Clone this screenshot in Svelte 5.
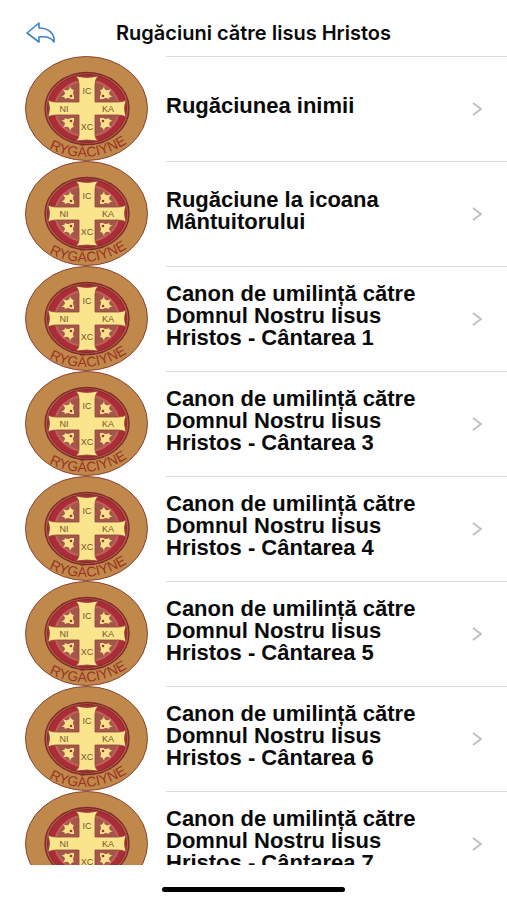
<script>
	const prayers = [
		'Rugăciunea inimii',
		'Rugăciune la icoana Mântuitorului',
		'Canon de umilință către Domnul Nostru Iisus Hristos - Cântarea 1',
		'Canon de umilință către Domnul Nostru Iisus Hristos - Cântarea 3',
		'Canon de umilință către Domnul Nostru Iisus Hristos - Cântarea 4',
		'Canon de umilință către Domnul Nostru Iisus Hristos - Cântarea 5',
		'Canon de umilință către Domnul Nostru Iisus Hristos - Cântarea 6',
		'Canon de umilință către Domnul Nostru Iisus Hristos - Cântarea 7'
	];
</script>

{#snippet medallion(i)}
	<svg class="medallion" viewBox="0 0 123 105" aria-hidden="true">
		<ellipse cx="61.5" cy="52.5" rx="61" ry="52" fill="#c0894b" stroke="#8a4434" />
		<ellipse cx="62" cy="52.5" rx="42" ry="36" fill="#bd5a48" stroke="#7c2a2b" stroke-width="1.4" />
		<ellipse cx="62" cy="52.5" rx="39.5" ry="34" fill="#ac2c38" stroke="#7c2a2b" />
		<ellipse cx="62" cy="52.5" rx="32" ry="28" fill="#a35649" stroke="#bd625a" stroke-width="2" />
		<path
			d="M51 20 Q62 23 73 20 Q70 24 70 28 V46 H93 Q98 46 101 44 Q98 52 101 61 Q98 59 93 59 H70 V79 Q70 82 73 85 Q62 83 51 85 Q54 82 54 79 V59 H31 Q26 59 23 61 Q26 52 23 44 Q26 46 31 46 H54 V28 Q54 24 51 20 Z"
			fill="#fbe58c"
			stroke="#8e4a3a"
			stroke-width="0.8"
		/>
		<g fill="#fbe08c">
			<path
				id="leaf-{i}"
				d="M45 30 Q46 34 49 34 Q47 37 49 40 V43 H46 Q43 41 40 43 Q40 40 36 41 Q40 39 40 37 L38 33 Q41 35 43 34 Q45 33 45 30 Z"
			/>
			<use href="#leaf-{i}" transform="matrix(-1 0 0 1 124 0)" />
			<use href="#leaf-{i}" transform="matrix(1 0 0 -1 0 105)" />
			<use href="#leaf-{i}" transform="matrix(-1 0 0 -1 124 105)" />
		</g>
		<g fill="#9a3a2c">
			<circle cx="46" cy="40" r="1.3" />
			<circle cx="78" cy="40" r="1.3" />
			<circle cx="46" cy="65" r="1.3" />
			<circle cx="78" cy="65" r="1.3" />
		</g>
		<g class="initials">
			<text x="62" y="38">IC</text>
			<text x="39" y="56">NI</text>
			<text x="83" y="56">KA</text>
			<text x="62" y="74">XC</text>
		</g>
		<path id="rim-{i}" d="M22 91 Q62 113 104 86" fill="none" />
		<text class="rim"><textPath href="#rim-{i}" startOffset="50%">RYGĂCIYNE</textPath></text>
	</svg>
{/snippet}

<div class="screen">
	<header>
		<button class="back" aria-label="Înapoi">
			<svg viewBox="0 0 30 22" aria-hidden="true">
				<path
					d="M13 1 L1 11 L13 20 V15 C20 14 25 15 28 20 C29 11 22 6 13 6 Z"
					fill="none"
					stroke="#3f82c8"
					stroke-width="1.6"
					stroke-linejoin="round"
				/>
			</svg>
		</button>
		<h1>Rugăciuni către Iisus Hristos</h1>
	</header>

	<ul>
		{#each prayers as prayer, i}
			<li>
				<a href="#prayer-{i}">
					{@render medallion(i)}
					<div class="row">
						<span class="name">{prayer}</span>
						<svg class="chevron" viewBox="0 0 10 14" aria-hidden="true">
							<path d="M1 1 L9 7 L1 13" fill="none" stroke="#c0c0c2" stroke-width="2" />
						</svg>
					</div>
				</a>
			</li>
		{/each}
	</ul>

	<footer><div class="home"></div></footer>
</div>

<style>
	:global(body) {
		background: #fefefe;
	}

	.screen {
		display: flex;
		flex-direction: column;
		height: 100vh;
		color: #0a0a0a;
		font-family: 'Liberation Sans', Arial, sans-serif;
	}

	header {
		display: grid;
		grid-template-columns: 58px 1fr 58px;
		align-items: center;
		box-sizing: border-box;
		height: 56px;
		padding-top: 10px;
		flex-shrink: 0;
	}

	.back {
		justify-self: end;
		width: 32px;
		height: 22px;
		padding: 0;
		border: 0;
		background: none;
		cursor: pointer;
	}

	.back svg {
		display: block;
		width: 30px;
		height: 22px;
	}

	h1 {
		margin: 0;
		font-family: Inter, sans-serif;
		font-size: 20px;
		line-height: 24px;
		font-weight: 600;
		text-align: center;
	}

	ul {
		flex: 1;
		min-height: 0;
		margin: 0;
		padding: 0;
		overflow: hidden;
		list-style: none;
	}

	a {
		display: flex;
		gap: 18px;
		height: 105px;
		padding-left: 25px;
		color: inherit;
		text-decoration: none;
	}

	.medallion {
		flex-shrink: 0;
		width: 123px;
		height: 105px;
	}

	.row {
		display: flex;
		flex: 1;
		align-items: center;
		justify-content: space-between;
		padding-right: 25px;
		border-top: 1px solid #dcdcdc;
	}

	.name {
		max-width: 264px;
		padding-bottom: 6px;
		font-size: 22px;
		font-weight: bold;
		line-height: 22px;
	}

	.chevron {
		flex-shrink: 0;
		width: 10px;
		height: 14px;
	}

	.initials {
		font-family: 'Liberation Sans', sans-serif;
		font-size: 9px;
		text-anchor: middle;
		fill: #75502f;
	}

	.rim {
		font-family: 'Liberation Sans', sans-serif;
		font-size: 14px;
		text-anchor: middle;
		fill: #9a3324;
	}

	footer {
		display: flex;
		justify-content: center;
		box-sizing: border-box;
		height: 35px;
		padding-top: 22px;
		flex-shrink: 0;
	}

	.home {
		width: 36%;
		height: 5px;
		border-radius: 3px;
		background: #000;
	}
</style>
